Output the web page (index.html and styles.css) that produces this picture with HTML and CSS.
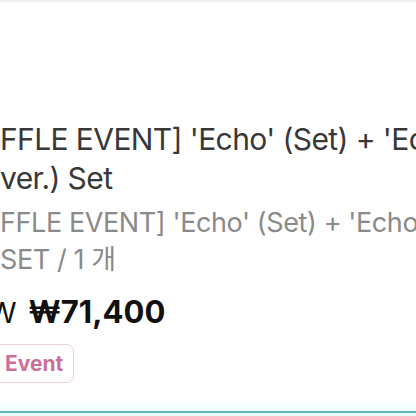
FILE: index.html
```html
<!DOCTYPE html>
<html lang="ko">
<head>
    <meta charset="UTF-8">
    <meta name="viewport" content="width=device-width, initial-scale=1.0">
    <title>Product</title>
    <link rel="stylesheet" href="styles.css">
</head>
<body>

<div class="page">
    <div class="product">
        <h1 class="product-title">
            <span class="line">FFLE EVENT] 'Echo' (Set) + 'Echo' (Digipack</span>
            <span class="line">ver.) Set</span>
        </h1>
        <p class="product-option">
            <span class="line">FFLE EVENT] 'Echo' (Set) + 'Echo' (Digipack</span>
            <span class="line">SET / 1 개</span>
        </p>
        <div class="price">
            <span class="price-origin">W</span>
            <span class="price-sale">₩71,400</span>
        </div>
        <span class="badge">Event</span>
    </div>
    <div class="bottom-bar"></div>
</div>

</body>
</html>
```

FILE: styles.css
```css
/* Basic reset */
* {
    margin: 0;
    padding: 0;
    box-sizing: border-box;
}

body {
    font-family: Inter, 'Noto Sans CJK KR', sans-serif;
    background-color: #fff;
    overflow: hidden;
}

.page {
    height: 416px;
    display: flex;
    flex-direction: column;
    border-top: 2px solid #eeeeee;
    overflow: hidden;
}

/* Product info */
.product {
    flex: 1;
    padding-top: 118px;
}

.line {
    display: block;
    white-space: nowrap;
}

.product-title {
    font-size: 30px;
    font-weight: 400;
    line-height: 39px;
    letter-spacing: -0.6px;
    color: #383838;
}

.product-option {
    margin-top: 6px;
    font-size: 27px;
    line-height: 37px;
    letter-spacing: -0.4px;
    color: #8a8a8a;
}

/* Price */
.price {
    display: flex;
    align-items: baseline;
    gap: 12px;
    margin-top: 14px;
    color: #111;
    font-size: 31px;
    line-height: 40px;
}

.price-origin {
    margin-left: -12px;
    font-weight: 400;
    font-size: 29px;
}

.price-sale {
    font-weight: 700;
}

/* Event tag */
.badge {
    display: inline-block;
    margin-top: 11px;
    margin-left: -10px;
    padding: 5px 10px 5px 14px;
    border: 1.5px solid #ecd2dd;
    border-radius: 7px;
    color: #c9709a;
    font-size: 21px;
    font-weight: 700;
    line-height: 27px;
}

/* Bottom edge */
.bottom-bar {
    height: 16px;
    background: linear-gradient(#ffffff, #eafcfd);
    border-bottom: 3px solid #e8fbfc;
}

.bottom-bar::after {
    content: '';
    display: block;
    height: 2px;
    margin-top: 11px;
    background-color: #5fb4c2;
}
```
